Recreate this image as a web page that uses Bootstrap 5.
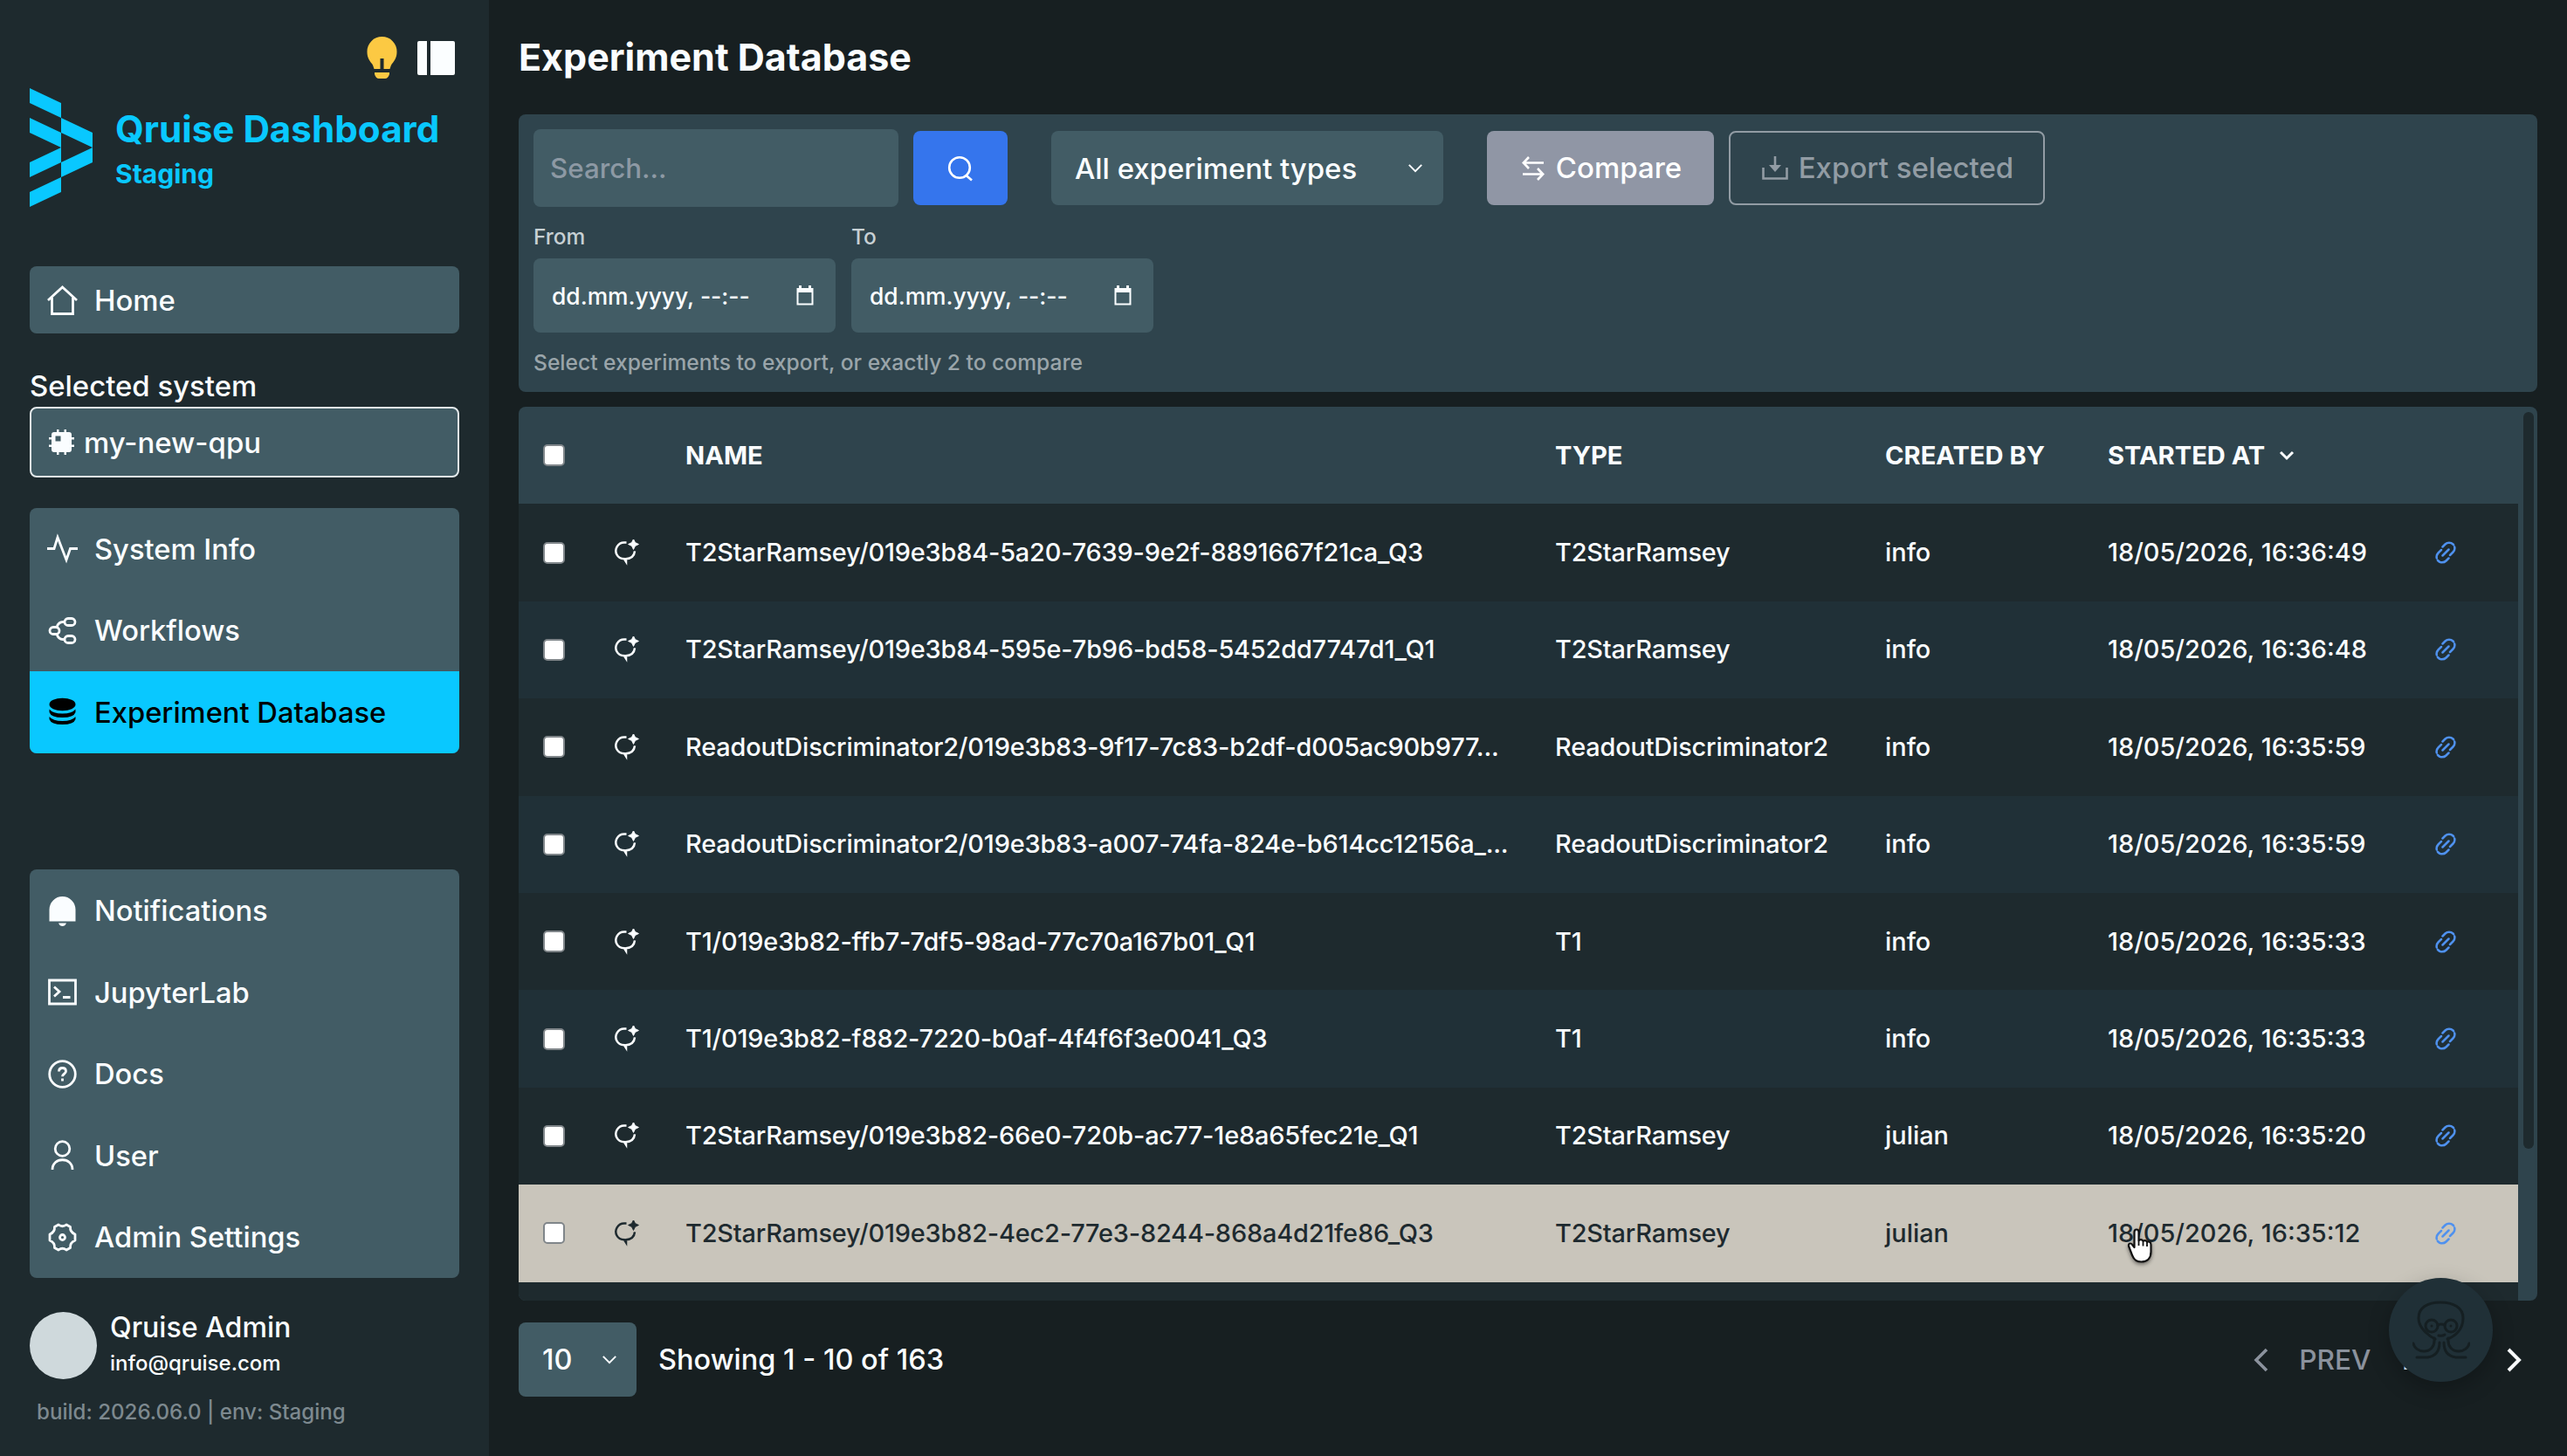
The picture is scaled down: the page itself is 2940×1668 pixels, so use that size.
<!DOCTYPE html>
<html lang="en">
  <head>
    <meta charset="UTF-8" />
    <meta name="viewport" content="width=device-width, initial-scale=1.0" />
    <title>Qruise Dashboard</title>
    <link
      href="https://cdn.jsdelivr.net/npm/bootstrap@5.3.0/dist/css/bootstrap.min.css"
      rel="stylesheet"
    />
    <style>
      :root {
        --q-bg: #171f21;
        --q-side: #1e2a2e;
        --q-panel: #2f444d;
        --q-field: #425c65;
        --q-cyan: #09c8ff;
      }
      body {
        background-color: var(--q-bg);
        color: #fafdff;
        font-family: Inter, "Liberation Sans", sans-serif;
        font-size: 32.9px;
        font-weight: 450;
        line-height: 40px;
      }
      svg {
        display: block;
        flex: none;
        fill: none;
        stroke: currentColor;
      }
      .rounded-q {
        border-radius: 8px;
      }
      .field {
        background-color: var(--q-field);
        border: 0;
        color: #fafdff;
        border-radius: 8px;
      }

      /* sidebar */
      .sidebar {
        width: 560px;
        padding: 43px 34px 34px;
        background-color: var(--q-side);
      }
      .side-tools {
        height: 46px;
        gap: 23px;
        padding-right: 5px;
      }
      .brand {
        margin: 12px 0 68px;
        gap: 26px;
        color: var(--q-cyan);
      }
      .brand-title {
        font-size: 42.2px;
        line-height: 50px;
        margin: 22px 0 8px;
      }
      .brand-env {
        font-size: 30px;
        line-height: 36px;
      }
      .home-link {
        height: 77px;
        margin-bottom: 40px;
      }
      .side-link {
        padding-left: 19px;
        gap: 18px;
        color: #fafdff;
        text-decoration: none;
      }
      .side-group {
        background-color: var(--q-field);
        overflow: hidden;
      }
      .side-group .side-link {
        height: 93.5px;
        font-size: 32.7px;
      }
      .side-link.active {
        background-color: var(--q-cyan);
        color: #000;
      }
      .system-box {
        height: 81px;
        margin: 4px 0 35px;
        padding-left: 20px;
        gap: 10px;
        border: 2px solid #e4eaec;
      }
      .side-bottom {
        padding-top: 1px;
      }
      .user-block {
        margin: 36px 0 20px;
        gap: 15px;
      }
      .avatar {
        width: 77px;
        height: 77px;
        background-color: #cfd9dc;
      }
      .user-name {
        font-size: 32.1px;
        line-height: 42px;
      }
      .user-mail {
        font-size: 24px;
        line-height: 40px;
      }
      .build-info {
        font-size: 24.1px;
        line-height: 32px;
        padding-left: 8px;
        color: #7d898f;
      }

      /* main */
      .main-area {
        padding: 40px 34px 0;
        min-width: 0;
      }
      .page-title {
        font-size: 43px;
        line-height: 50px;
        margin-bottom: 41px;
      }
      .filters {
        height: 318px;
        padding: 17px;
        margin-bottom: 17px;
        background-color: var(--q-panel);
      }
      .filter-row {
        gap: 17px;
        height: 89px;
      }
      .search-input {
        width: 418px;
        height: 89px;
        padding-left: 19px;
        color: #8d99a4;
        font-size: 31.3px;
      }
      .tool-btn {
        height: 85px;
        padding: 0;
        font-size: 33px;
        font-weight: 450;
        border-radius: 8px;
      }
      .btn-search {
        width: 108px;
        background-color: #3575ed;
        color: #fff;
      }
      .type-select {
        width: 449px;
        height: 85px;
        margin: 0 33px;
        padding: 0 23px 0 27px;
      }
      .btn-compare {
        width: 260px;
        gap: 13px;
        padding-left: 3px;
        background-color: #9096a5;
        color: #fff;
      }
      .btn-export {
        width: 362px;
        gap: 12px;
        padding-left: 2px;
        border: 2px solid #929ca4;
        color: #929ca4;
      }
      .filter-dates {
        gap: 17px;
      }
      .date-label {
        font-size: 24.5px;
        line-height: 30px;
        margin: 19px 0 10px;
        color: #c7d0d4;
      }
      .date-input {
        width: 346px;
        height: 85px;
        padding: 0 25px 0 21px;
        font-size: 26.4px;
      }
      .filter-dates > div + div {
        margin-left: 1px;
      }
      .hint {
        font-size: 24.6px;
        line-height: 30px;
        margin-top: 19px;
        color: #9aa5aa;
      }

      /* table */
      .table-wrap {
        height: 1024px;
        overflow: hidden;
        background-color: var(--q-panel);
      }
      .exp-table {
        width: 2290px;
        table-layout: fixed;
        font-size: 28.9px;
        line-height: 36px;
        color: #fafdff;
      }
      .exp-table > :not(caption) > * > * {
        height: 111.4px;
        padding: 0 0 0 28px;
        border: 0;
        white-space: nowrap;
        vertical-align: middle;
        color: inherit;
        background-color: transparent;
        box-shadow: none;
      }
      .exp-table thead {
        font-size: 29.1px;
      }
      .exp-table tbody tr {
        background-color: var(--q-side);
      }
      .exp-table tbody tr:nth-child(even) {
        background-color: #203037;
      }
      .exp-table tbody tr.hovered {
        background-color: #c9c5bb;
        color: #1e2a2f;
      }
      .exp-table tbody td:nth-child(3),
      .exp-table tbody td:nth-child(4) {
        letter-spacing: -0.17px;
      }
      .exp-table .form-check-input {
        display: block;
        width: 25px;
        height: 25px;
        margin: 0;
        border: 2px solid #80868a;
        border-radius: 5px;
        background-color: #fff;
      }
      .link-icon {
        color: #4f91ee;
      }
      .scroll-thumb {
        width: 12px;
        height: 844px;
        margin: 6px 4px 0 6px;
        border-radius: 6px;
        background-color: var(--q-side);
      }

      /* footer */
      .pager {
        height: 85px;
        margin-top: 25px;
        padding-right: 18px;
        font-size: 32.5px;
      }
      .size-select {
        width: 135px;
        height: 85px;
        padding: 0 22px 0 27px;
        margin-right: 25px;
      }
      .pager-nav {
        gap: 35.5px;
        font-size: 31.6px;
      }
      .pager-off {
        color: #8b929d;
      }

      .assistant-btn {
        position: absolute;
        left: 2736px;
        top: 1464px;
        width: 119px;
        height: 119px;
        border-radius: 50%;
        background-color: #203037;
        color: #151f22;
        box-shadow: 0 8px 24px rgba(0, 0, 0, 0.25);
      }
      .pointer {
        position: absolute;
        left: 2434px;
        top: 1405px;
        filter: drop-shadow(0 2px 2px rgba(0, 0, 0, 0.45));
      }
    </style>
  </head>
  <body>
    <svg class="d-none">
      <symbol id="i-chat" viewBox="0 0 30 30">
        <path d="M14.500 3.500h-2.500a9.500 9.500 0 0 0-8.500 14c1.700 3.200 4.500 4.600 8.500 4.800l2 3.200v-3.200c6-.6 9.500-4 10-9" stroke-width="2.500" />
        <path d="M22.500-.5l2 4 4 2-4 2-2 4-2-4-4-2 4-2z" fill="currentColor" stroke="currentColor" stroke-width=".8" />
      </symbol>
      <symbol id="i-link" viewBox="0 0 26 26">
        <path d="M9.500 6.500l3-3a6.300 6.300 0 0 1 9 9l-3.500 3.500M16.500 19.500l-3 3a6.300 6.300 0 0 1-9-9l3.500-3.500M9.500 16.500l7-7" stroke-width="2.500" stroke-linecap="round" stroke-dasharray="15 2.500 20" />
      </symbol>
      <symbol id="i-down" viewBox="0 0 20 12">
        <path d="M2 2l8 8 8-8" stroke-width="2.200" />
      </symbol>
      <symbol id="i-cal" viewBox="0 0 20 23">
        <path d="M1.500 4h17v17.500h-17z" stroke-width="2" />
        <path d="M1 3h18v5H1zM3 0h3v4H3zM14 0h3v4h-3z" fill="currentColor" stroke="none" />
      </symbol>
    </svg>

    <div class="d-flex vh-100 overflow-hidden position-relative">
      <aside class="sidebar d-flex flex-column flex-shrink-0">
        <div class="side-tools d-flex justify-content-end align-items-center">
          <svg width="35" height="48" viewBox="0 0 35 48">
            <path d="M17.500 0a17 17 0 0 0-17 17.500c0 6 2.500 10 5.500 13.500.9 1.200 1.600 3 2.500 6h7V25h4v12h7c.9-3 1.600-4.800 2.500-6 3-3.500 5.500-7.500 5.500-13.500A17 17 0 0 0 17.500 0zM9 41h17v2q-1.500 5-5 5h-7q-3.500 0-5-5z" fill="#fcc943" stroke="none" />
          </svg>
          <svg width="43" height="39" viewBox="0 0 43 39">
            <path d="M2 0h9v39H2q-2 0-2-2V2q0-2 2-2zM15 0h26q2 0 2 2v35q0 2-2 2H15z" fill="#fbfeff" stroke="none" />
          </svg>
        </div>

        <div class="brand d-flex align-items-start">
          <svg width="72" height="136" viewBox="0 0 72 136">
            <path d="M0 0l36 17v17L0 17zM0 34l36 17v17L0 51zM36 34l36 17v17L36 51zM36 68v17L0 102V85zM72 68v17l-36 17V85zM36 102v17L0 136v-17z" fill="currentColor" stroke="none" />
          </svg>
          <div>
            <h1 class="brand-title fw-bold">Qruise Dashboard</h1>
            <div class="brand-env fw-bold">Staging</div>
          </div>
        </div>

        <a class="home-link side-link field rounded-q d-flex align-items-center" href="#">
          <svg width="37" height="37" viewBox="0 0 37 37">
            <path d="M2 19L18.500 4 35 19M6.500 16v18.500h24V16" stroke-width="2.800" />
          </svg>
          Home
        </a>

        <div>Selected system</div>
        <div class="system-box field rounded-q d-flex align-items-center">
          <svg width="30" height="30" viewBox="0 0 30 30">
            <path d="M5 3h4V0h2.500v3h6V0H20v3h3q3 0 3 3v3h3v2.500h-3v6h3V20h-3v3q0 3-3 3h-3v3h-2.500v-3h-6v3H9v-3H6q-3 0-3-3v-3H0v-2.500h3v-6H0V9h3V6q0-3 3-3zM7.500 7.500v6h6v-6z" fill="currentColor" fill-rule="evenodd" stroke="none" />
          </svg>
          my-new-qpu
        </div>

        <nav class="side-group rounded-q">
          <a class="side-link d-flex align-items-center" href="#">
            <svg width="37" height="37" viewBox="0 0 37 37">
              <path d="M1 18.500h8l4-13 10 26 4.500-13H36" stroke-width="2.800" />
            </svg>
            System Info
          </a>
          <a class="side-link d-flex align-items-center" href="#">
            <svg width="37" height="37" viewBox="0 0 37 37">
              <g stroke-width="2.800">
                <rect x="4" y="14.500" width="11" height="8" rx="4" />
                <rect x="21" y="4.500" width="12" height="8" rx="4" />
                <rect x="21" y="24.500" width="12" height="8" rx="4" />
                <path d="M21 8.500h-2q-5 0-7 6M21 28.500h-2q-5 0-7-6" />
              </g>
            </svg>
            Workflows
          </a>
          <a class="side-link active d-flex align-items-center" href="#">
            <svg width="37" height="37" viewBox="0 0 37 37">
              <g fill="currentColor" stroke="none">
                <ellipse cx="18.500" cy="10" rx="15" ry="7.300" />
                <path d="M3.500 15.500q4 5 15 5t15-5v3.500q-2 6-15 6t-15-6zM3.500 24q4 5 15 5t15-5v3q-2 6-15 6t-15-6z" />
              </g>
            </svg>
            Experiment Database
          </a>
        </nav>

        <nav class="side-group side-bottom rounded-q mt-auto">
          <a class="side-link d-flex align-items-center" href="#">
            <svg width="37" height="37" viewBox="0 0 37 37">
              <path d="M3.500 30.500V17a15 15 0 0 1 30 0v13.500zM14 32.500h9q-1.500 3.500-4.500 3.500T14 32.500z" fill="currentColor" stroke="none" />
            </svg>
            Notifications
          </a>
          <a class="side-link d-flex align-items-center" href="#">
            <svg width="37" height="37" viewBox="0 0 37 37">
              <path d="M3.500 5h30v27h-30zM9 12.500l6 5.500-6 5.500M19 24.500h8.500" stroke-width="2.800" />
            </svg>
            JupyterLab
          </a>
          <a class="side-link d-flex align-items-center" href="#">
            <svg width="37" height="37" viewBox="0 0 37 37">
              <circle cx="18.500" cy="18.500" r="14.800" stroke-width="2.800" />
              <path d="M14.500 15.500q0-4 4-4t4 3.800c0 3.200-4 2.700-4 6M18.500 23.500v3" stroke-width="2.800" />
            </svg>
            Docs
          </a>
          <a class="side-link d-flex align-items-center" href="#">
            <svg width="37" height="37" viewBox="0 0 37 37">
              <circle cx="18.500" cy="11" r="8.300" stroke-width="2.800" />
              <path d="M7 35c0-15 23-15 23 0" stroke-width="2.800" />
            </svg>
            User
          </a>
          <a class="side-link d-flex align-items-center" href="#">
            <svg width="37" height="37" viewBox="0 0 37 37">
              <path d="M14 4q4.500 3.500 9 0l4.500 2.500q-.5 6 5.500 8.500v7q-6 2.500-5.500 8.500L23 33q-4.500-3.500-9 0l-4.500-2.500Q10 24.500 4 22v-7q6-2.500 5.500-8.500z" stroke-width="2.800" stroke-linejoin="round" />
              <circle cx="18.500" cy="18.500" r="3" stroke-width="2.800" />
            </svg>
            Admin Settings
          </a>
        </nav>

        <div class="user-block d-flex align-items-center">
          <div class="avatar rounded-circle"></div>
          <div>
            <div class="user-name">Qruise Admin</div>
            <div class="user-mail">info@qruise.com</div>
          </div>
        </div>
        <div class="build-info">build: 2026.06.0 | env: Staging</div>
      </aside>

      <main class="main-area flex-grow-1">
        <h2 class="page-title fw-bold">Experiment Database</h2>

        <section class="filters rounded-q">
          <div class="filter-row d-flex align-items-center">
            <div class="search-input field d-flex align-items-center">Search...</div>
            <button class="btn tool-btn btn-search d-flex align-items-center justify-content-center">
              <svg width="30" height="30" viewBox="0 0 30 30">
                <path d="M21 22.500l7 6" stroke-width="2.600" />
                <circle cx="14" cy="14" r="11.800" stroke-width="2.600" />
              </svg>
            </button>
            <div class="type-select field d-flex align-items-center justify-content-between">
              All experiment types
              <svg width="18" height="11"><use href="#i-down" /></svg>
            </div>
            <button class="btn tool-btn btn-compare d-flex align-items-center justify-content-center">
              <svg width="26" height="28" viewBox="0 0 26 28">
                <path d="M25 7.500H2M8 1L1.800 7.500 8 14M1 20.500h23M18 14l6.200 6.500L18 27" stroke-width="2.600" />
              </svg>
              Compare
            </button>
            <button class="btn tool-btn btn-export d-flex align-items-center justify-content-center">
              <svg width="30" height="28" viewBox="0 0 30 28">
                <path d="M1.500 13v12.500h27V13M15 0v14" stroke-width="2.600" />
                <path d="M8 10h14l-7 8z" fill="currentColor" stroke="none" />
              </svg>
              Export selected
            </button>
          </div>
          <div class="filter-dates d-flex">
            <div>
              <div class="date-label">From</div>
              <div class="date-input field d-flex align-items-center justify-content-between">
                dd.mm.yyyy, --:--
                <svg width="20" height="23"><use href="#i-cal" /></svg>
              </div>
            </div>
            <div>
              <div class="date-label">To</div>
              <div class="date-input field d-flex align-items-center justify-content-between">
                dd.mm.yyyy, --:--
                <svg width="20" height="23"><use href="#i-cal" /></svg>
              </div>
            </div>
          </div>
          <div class="hint">Select experiments to export, or exactly 2 to compare</div>
        </section>

        <section class="table-wrap rounded-q d-flex">
          <div>
            <table class="table exp-table mb-0">
              <colgroup>
                <col style="width: 81px" />
                <col style="width: 82px" />
                <col style="width: 996px" />
                <col style="width: 378px" />
                <col style="width: 255px" />
                <col style="width: 374px" />
                <col style="width: 124px" />
              </colgroup>
              <thead>
                <tr>
                  <th><input class="form-check-input" type="checkbox" /></th>
                  <th></th>
                  <th>NAME</th>
                  <th>TYPE</th>
                  <th>CREATED BY</th>
                  <th>
                    <div class="d-flex align-items-center">
                      <span class="me-3">STARTED AT</span>
                      <svg width="18" height="12" viewBox="0 0 18 12">
                        <path d="M2 2l7 7 7-7" stroke-width="3" />
                      </svg>
                    </div>
                  </th>
                  <th></th>
                </tr>
              </thead>
              <tbody id="expRows"></tbody>
            </table>
          </div>
          <div class="scroll-thumb"></div>
        </section>

        <footer class="pager d-flex align-items-center">
          <div class="size-select field d-flex align-items-center justify-content-between">
            10
            <svg width="18" height="11"><use href="#i-down" /></svg>
          </div>
          <div>Showing 1 - 10 of 163</div>
          <div class="pager-nav ms-auto d-flex align-items-center">
            <svg class="pager-off" width="17" height="28" viewBox="0 0 17 28">
              <path d="M15 2L3 14l12 12" stroke-width="3.600" />
            </svg>
            <span class="pager-off">PREV</span>
            <span>NEXT</span>
            <svg width="17" height="28" viewBox="0 0 17 28">
              <path d="M2 2l12 12L2 26" stroke-width="4" />
            </svg>
          </div>
        </footer>
      </main>

      <div class="assistant-btn d-flex align-items-center justify-content-center">
        <svg width="66" height="68" viewBox="0 0 66 68">
          <g stroke-width="3" stroke-linecap="round">
            <path d="M26 44c-2-1-6-3-10-7C9 31 7 25 7 20 7 8 17 2 32 2s26 6 26 18c0 8-3 14-9 19-3 2-5 4-9 5" />
            <circle cx="22" cy="29" r="7" />
            <circle cx="44" cy="29" r="7" />
            <path d="M29 28q4-2 8 0M30 40q4 1 7-1" />
            <path d="M25 43c1 10-5 15-12 15-6 0-11-4-12-9M31 48c0 11-6 16-14 17H5M41 43c-1 10 5 15 12 15 6 0 11-4 12-9M36 48c0 11 6 16 14 17h11" />
          </g>
          <circle cx="22" cy="29" r="1.500" fill="currentColor" stroke="none" />
          <circle cx="44" cy="29" r="1.500" fill="currentColor" stroke="none" />
        </svg>
      </div>
      <svg class="pointer" width="34" height="44" viewBox="0 0 34 44">
        <path d="M10.500 24V6.500q0-3 2.500-3t2.500 3V16q3-2 5 .7 3-1.500 4.600 1 4.400-1 4.400 3.300v8c0 7-4 11.500-11 11.500-6 0-8.500-2.500-10.500-7.500L4 22.500q-.5-3 2-3 1.500 0 2.500 2z" fill="#fff" stroke="#111" stroke-width="2.200" stroke-linejoin="round" />
        <path d="M15.500 16v6M20.500 17v5.500M25 18v5" stroke="#111" stroke-width="1.800" />
      </svg>
    </div>

    <script src="https://cdn.jsdelivr.net/npm/bootstrap@5.3.0/dist/js/bootstrap.bundle.min.js"></script>
    <script>
      const experiments = [
        ["T2StarRamsey/019e3b84-5a20-7639-9e2f-8891667f21ca_Q3", "T2StarRamsey", "info", "16:36:49"],
        ["T2StarRamsey/019e3b84-595e-7b96-bd58-5452dd7747d1_Q1", "T2StarRamsey", "info", "16:36:48"],
        ["ReadoutDiscriminator2/019e3b83-9f17-7c83-b2df-d005ac90b977...", "ReadoutDiscriminator2", "info", "16:35:59"],
        ["ReadoutDiscriminator2/019e3b83-a007-74fa-824e-b614cc12156a_...", "ReadoutDiscriminator2", "info", "16:35:59"],
        ["T1/019e3b82-ffb7-7df5-98ad-77c70a167b01_Q1", "T1", "info", "16:35:33"],
        ["T1/019e3b82-f882-7220-b0af-4f4f6f3e0041_Q3", "T1", "info", "16:35:33"],
        ["T2StarRamsey/019e3b82-66e0-720b-ac77-1e8a65fec21e_Q1", "T2StarRamsey", "julian", "16:35:20"],
        ["T2StarRamsey/019e3b82-4ec2-77e3-8244-868a4d21fe86_Q3", "T2StarRamsey", "julian", "16:35:12"],
      ];

      document.getElementById("expRows").innerHTML =
        experiments
          .map(
            ([name, type, user, time], i) => `
            <tr class="${i === 7 ? "hovered" : ""}">
              <td><input class="form-check-input" type="checkbox" /></td>
              <td><svg width="30" height="30"><use href="#i-chat" /></svg></td>
              <td>${name}</td>
              <td>${type}</td>
              <td>${user}</td>
              <td>18/05/2026, ${time}</td>
              <td><svg class="link-icon" width="26" height="26"><use href="#i-link" /></svg></td>
            </tr>`
          )
          .join("") + "<tr><td colspan='7'></td></tr>";
    </script>
  </body>
</html>
